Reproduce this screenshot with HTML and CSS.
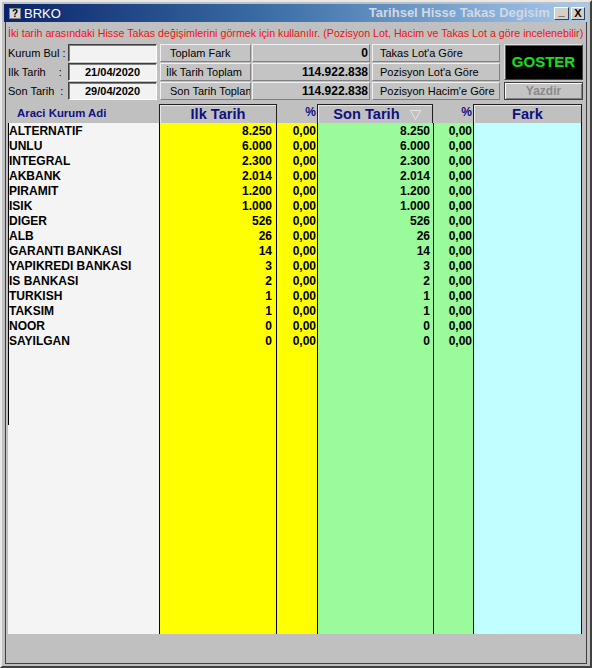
FILE: index.html
```html
<!DOCTYPE html>
<html lang="tr">
<head>
<meta charset="utf-8">
<title>BRKO</title>
<link rel="stylesheet" href="styles.css">
</head>
<body>
<div class="window">
  <div class="titlebar">
    <span class="ticon">?</span>
    <span class="tname">BRKO</span>
    <span class="ttitle"><span>Tarihsel Hisse Takas Degisim</span></span>
    <span class="tbtn tmin">_</span>
    <span class="tbtn tclose">X</span>
  </div>
  <div class="client">
    <div class="info">İki tarih arasındaki Hisse Takas değişimlerini görmek için kullanılır. (Pozisyon Lot, Hacim ve Takas Lot a göre incelenebilir)</div>
    <div class="controls">
      <div class="lbl r1">Kurum Bul :</div>
      <div class="inp r1"></div>
      <div class="btn r1 c3 pad10">Toplam Fark</div>
      <div class="val r1 c4">0</div>
      <div class="btn r1 c5 pad8">Takas Lot'a Göre</div>
      <div class="goster">GOSTER</div>

      <div class="lbl r2">Ilk Tarih<span class="colon1">:</span></div>
      <div class="inp r2">21/04/2020</div>
      <div class="btn r2 c3 pad6">İlk Tarih Toplam</div>
      <div class="val r2 c4">114.922.838</div>
      <div class="btn r2 c5 pad8">Pozisyon Lot'a Göre</div>

      <div class="lbl r3">Son Tarih<span class="colon2">:</span></div>
      <div class="inp r3">29/04/2020</div>
      <div class="btn r3 c3 pad10">Son Tarih Toplam</div>
      <div class="val r3 c4">114.922.838</div>
      <div class="btn r3 c5 pad8">Pozisyon Hacim'e Göre</div>
      <div class="yazdir">Yazdir</div>
    </div>

    <div class="grid">
      <div class="ghead">
        <div class="h hname">Araci Kurum Adi</div>
        <div class="h hbtn hilk">Ilk Tarih</div>
        <div class="h hpct hp1">%</div>
        <div class="h hbtn hson">Son Tarih <svg class="tri" width="11" height="10" viewBox="0 0 11 10"><polygon points="0.5,0.5 10.5,0.5 5.5,9.5" fill="none" stroke="#e6e6e6" stroke-width="1"/></svg></div>
        <div class="h hpct hp2">%</div>
        <div class="h hbtn hfark">Fark</div>
      </div>
      <div class="gbody">
        <div class="col cname">
          <div class="cell">ALTERNATIF</div>
          <div class="cell">UNLU</div>
          <div class="cell">INTEGRAL</div>
          <div class="cell">AKBANK</div>
          <div class="cell">PIRAMIT</div>
          <div class="cell">ISIK</div>
          <div class="cell">DIGER</div>
          <div class="cell">ALB</div>
          <div class="cell">GARANTI BANKASI</div>
          <div class="cell">YAPIKREDI BANKASI</div>
          <div class="cell">IS BANKASI</div>
          <div class="cell">TURKISH</div>
          <div class="cell">TAKSIM</div>
          <div class="cell">NOOR</div>
          <div class="cell">SAYILGAN</div>
        </div>
        <div class="col cilk">
          <div class="cell">8.250</div>
          <div class="cell">6.000</div>
          <div class="cell">2.300</div>
          <div class="cell">2.014</div>
          <div class="cell">1.200</div>
          <div class="cell">1.000</div>
          <div class="cell">526</div>
          <div class="cell">26</div>
          <div class="cell">14</div>
          <div class="cell">3</div>
          <div class="cell">2</div>
          <div class="cell">1</div>
          <div class="cell">1</div>
          <div class="cell">0</div>
          <div class="cell">0</div>
        </div>
        <div class="col cp1">
          <div class="cell">0,00</div><div class="cell">0,00</div><div class="cell">0,00</div>
          <div class="cell">0,00</div><div class="cell">0,00</div><div class="cell">0,00</div>
          <div class="cell">0,00</div><div class="cell">0,00</div><div class="cell">0,00</div>
          <div class="cell">0,00</div><div class="cell">0,00</div><div class="cell">0,00</div>
          <div class="cell">0,00</div><div class="cell">0,00</div><div class="cell">0,00</div>
        </div>
        <div class="col cson">
          <div class="cell">8.250</div>
          <div class="cell">6.000</div>
          <div class="cell">2.300</div>
          <div class="cell">2.014</div>
          <div class="cell">1.200</div>
          <div class="cell">1.000</div>
          <div class="cell">526</div>
          <div class="cell">26</div>
          <div class="cell">14</div>
          <div class="cell">3</div>
          <div class="cell">2</div>
          <div class="cell">1</div>
          <div class="cell">1</div>
          <div class="cell">0</div>
          <div class="cell">0</div>
        </div>
        <div class="col cp2">
          <div class="cell">0,00</div><div class="cell">0,00</div><div class="cell">0,00</div>
          <div class="cell">0,00</div><div class="cell">0,00</div><div class="cell">0,00</div>
          <div class="cell">0,00</div><div class="cell">0,00</div><div class="cell">0,00</div>
          <div class="cell">0,00</div><div class="cell">0,00</div><div class="cell">0,00</div>
          <div class="cell">0,00</div><div class="cell">0,00</div><div class="cell">0,00</div>
        </div>
        <div class="col cfark"></div>
      </div>
    </div>
  </div>
</div>
</body>
</html>
```
FILE: styles.css
```css
* { box-sizing: border-box; }
html, body { margin: 0; padding: 0; }
body {
  width: 592px;
  height: 668px;
  font-family: "Liberation Sans", Arial, sans-serif;
  background: #c0c0c0;
  overflow: hidden;
}
.window {
  width: 592px;
  height: 668px;
  background: #c0c0c0;
  border: 2px solid;
  border-color: #e8e8e8 #404040 #404040 #e8e8e8;
  padding: 2px;
  display: flex;
  flex-direction: column;
}
.titlebar {
  height: 18px;
  flex: none;
  display: flex;
  align-items: center;
  background: linear-gradient(to right, #0a246a 0%, #3a6ea5 45%, #a6caf0 100%);
  padding-left: 5px;
  padding-right: 3px;
  overflow: hidden;
}
.ticon {
  width: 12px;
  height: 11px;
  background: #d8d8d8;
  border: 1px solid #808080;
  color: #000;
  font-weight: bold;
  font-size: 10px;
  line-height: 9px;
  text-align: center;
  flex: none;
}
.tname {
  color: #ffffff;
  font-size: 13px;
  margin-left: 3px;
  flex: none;
}
.ttitle {
  flex: 1;
  overflow: hidden;
  height: 18px;
  line-height: 18px;
  display: flex;
  justify-content: flex-start;
  padding-left: 308px;
  white-space: nowrap;
  color: #d4d8e0;
  font-weight: bold;
  font-size: 13px;
}
.ttitle span { flex: none; }
.tbtn {
  width: 15px;
  height: 13px;
  flex: none;
  background: #d4d0c8;
  border: 1px solid;
  border-color: #ffffff #404040 #404040 #ffffff;
  color: #000;
  font-weight: bold;
  font-size: 11px;
  line-height: 11px;
  text-align: center;
}
.tmin { margin-left: 1px; line-height: 6px; }
.tclose { margin-left: 2px; width: 14px; }

.client {
  flex: 1;
  margin: 0 1px;
  border-left: 1px solid #404040;
  border-right: 1px solid #404040;
  border-bottom: 1px solid #404040;
  padding-left: 2px;
}
.info {
  color: #f01010;
  font-size: 10.7px;
  height: 19px;
  padding-top: 5px;
  line-height: 12px;
  white-space: nowrap;
  overflow: hidden;
}
.controls {
  margin-top: 3px;
  display: grid;
  grid-template-columns: 60px 89px 94px 119px 130px 83px;
  grid-template-rows: 18px 18px 18px;
  row-gap: 1px;
  font-size: 11px;
}
.r1 { grid-row: 1; }
.r2 { grid-row: 2; }
.r3 { grid-row: 3; }
.c3 { grid-column: 3; margin-left: 3px; }
.c4 { grid-column: 4; margin-left: 1px; }
.c5 { grid-column: 5; margin-left: 2px; }
.lbl {
  grid-column: 1;
  line-height: 18px;
  color: #000;
  white-space: nowrap;
}
.colon1 { margin-left: 13px; }
.colon2 { margin-left: 6px; }
.inp {
  grid-column: 2;
  background: #f2f2f2;
  border: 1px solid;
  border-color: #404040 #ffffff #ffffff #404040;
  box-shadow: inset 1px 1px 0 #808080;
  font-weight: bold;
  font-size: 11px;
  text-align: center;
  line-height: 16px;
}
.btn {
  background: #c4c4c4;
  border: 1px solid;
  border-color: #f0f0f0 #808080 #808080 #f0f0f0;
  line-height: 16px;
  white-space: nowrap;
  overflow: hidden;
  color: #000;
}
.pad10 { padding-left: 9px; }
.pad6 { padding-left: 5px; }
.pad8 { padding-left: 7px; }
.val {
  background: #c4c4c4;
  border: 1px solid;
  border-color: #f0f0f0 #808080 #808080 #f0f0f0;
  font-weight: bold;
  font-size: 12px;
  text-align: right;
  line-height: 16px;
  padding-right: 1px;
}
.goster {
  grid-column: 6;
  grid-row: 1 / span 2;
  margin-left: 4px;
  height: 36px;
  background: #000;
  border: 1px solid;
  border-color: #e0e0e0 #404040 #404040 #e0e0e0;
  box-shadow: inset 1px 1px 0 #606060;
  color: #18e018;
  font-weight: bold;
  font-size: 15px;
  text-align: center;
  line-height: 34px;
}
.yazdir {
  grid-column: 6;
  grid-row: 3;
  margin-left: 4px;
  background: #c4c4c4;
  border: 1px solid #404040;
  box-shadow: inset 1px 1px 0 #ffffff, inset -1px -1px 0 #808080;
  color: #8a8a8a;
  font-weight: bold;
  font-size: 12px;
  text-align: center;
  line-height: 16px;
}

.grid { margin-top: 4px; }
.ghead {
  display: flex;
  height: 19px;
}
.h {
  flex: none;
  color: #101080;
  font-weight: bold;
  white-space: nowrap;
}
.hname {
  width: 151px;
  font-size: 11.4px;
  padding-left: 9px;
  line-height: 18px;
}
.hbtn {
  border: 1px solid #202020;
  border-bottom: none;
  box-shadow: inset 1px 1px 0 #e8e8e8;
  font-size: 14.6px;
  text-align: center;
  line-height: 18px;
}
.hilk { width: 118px; }
.hson { width: 116px; padding-left: 4px; }
.hfark { width: 109px; }
.hpct {
  width: 40px;
  font-size: 12px;
  text-align: right;
  line-height: 17px;
  padding-right: 1px;
}
.tri { margin-left: 6px; vertical-align: -1px; }

.gbody {
  display: flex;
  height: 511px;
}
.col {
  flex: none;
  border-right: 1px solid #000;
  padding-top: 1px;
  font-weight: bold;
  font-size: 12px;
  color: #000;
}
.cell {
  height: 15px;
  line-height: 15px;
  white-space: nowrap;
}
.cname {
  width: 152px;
  background: linear-gradient(#000, #000) left top / 1px 302px no-repeat, #f4f4f4;
  padding-left: 1px;
}
.cilk { width: 117px; background: #ffff00; text-align: right; padding-right: 4px; }
.cp1 { width: 41px; background: #ffff00; text-align: right; padding-right: 1px; }
.cson { width: 116px; background: #99fb99; text-align: right; padding-right: 3px; }
.cp2 { width: 40px; background: #99fb99; text-align: right; padding-right: 1px; }
.cfark { width: 108px; background: #bfffff; }
```
